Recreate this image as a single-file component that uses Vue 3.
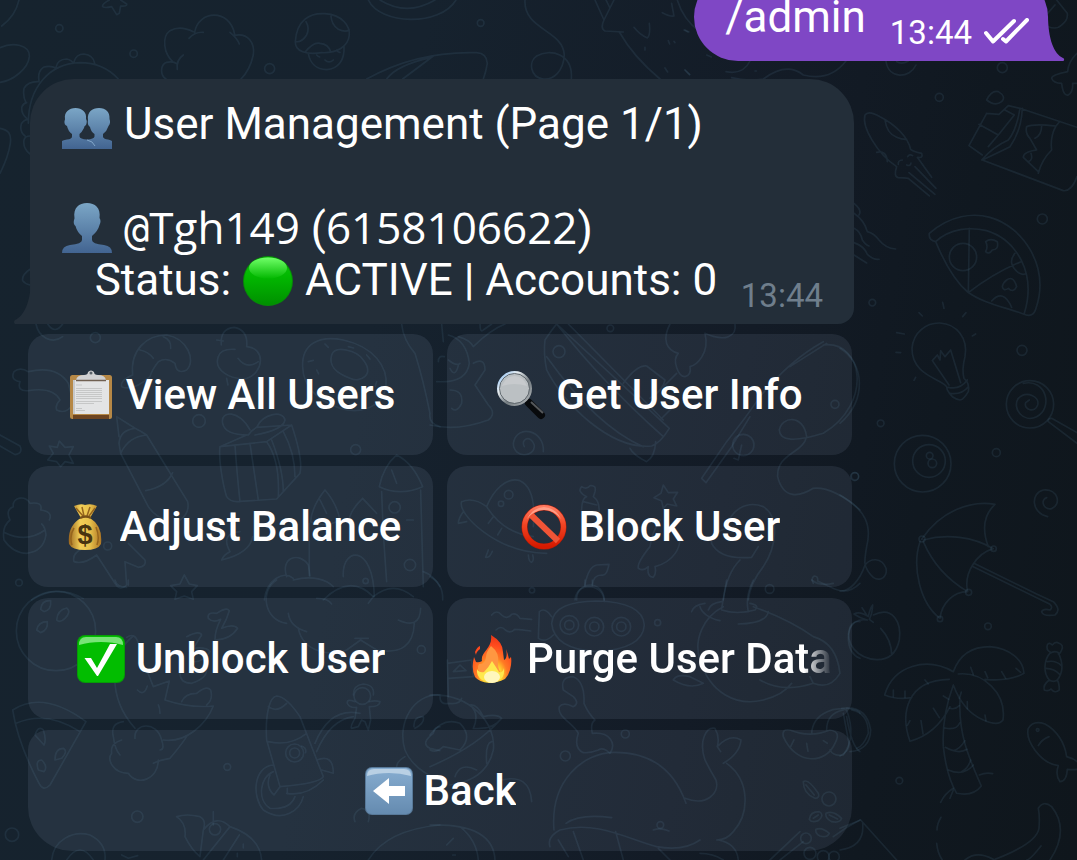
<script setup>
// Wallpaper doodles, grouped into tiles. Each tile is drawn at a third of its own units.
const tiles = [
  {
    x: 0, y: 0,
    dots: [[178, 85, 11], [401, 161, 11], [809, 206, 15]],
    lines: [
      'M57 0C50 30 30 60 5 78M0 143C40 125 90 135 88 170C85 205 40 242 0 247M0 385C25 390 35 400 31 430C25 470 10 500 0 520',
      'M328 0Q305 12 308 20Q315 25 335 20L350 44L358 40L362 18Q382 20 380 12L362 0',
      'M85 370C85 260 150 190 240 188C290 188 330 210 355 237M222 186Q228 162 252 162Q280 165 284 190M168 202Q172 178 200 177Q215 180 220 190M117 242Q112 215 130 202Q150 195 168 204M78 308Q68 290 72 265Q85 243 117 245M80 355Q62 340 66 320Q70 310 80 308M75 408Q58 395 64 372Q70 360 84 358M90 462Q68 445 72 420Q75 408 90 408M90 808Q65 825 68 842Q75 852 90 855',
      'M498 237C480 225 480 195 500 187Q520 183 532 192M532 208Q528 180 550 165M520 187C490 160 485 110 510 92Q540 75 580 95M567 115Q585 95 610 97M584 97C595 30 690 25 704 103M690 97Q712 115 718 132M704 106C745 98 765 130 760 165C752 200 740 220 723 237',
      'M886 125C890 60 930 38 975 41C1030 45 1050 80 1048 105C1045 140 1010 160 965 158C920 165 885 155 886 125ZM918 65Q930 85 920 105Q905 128 888 125M993 48Q995 75 1015 88Q1035 98 1048 90M915 157Q940 125 960 130Q985 132 992 155M925 160C930 190 950 208 980 209C1015 207 1035 180 1032 138M975 180Q987 192 1000 180M950 165q5 5 9 6M1010 150q3 8 10 7',
    ],
  },
  {
    x: 340, y: 0,
    dots: [[422, 69, 10]],
    lines: [
      'M85 0C120 75 300 80 348 0M120 0Q200 50 285 0M80 237C200 170 310 155 410 158Q440 160 442 190Q438 215 430 237M140 237Q170 195 275 172M188 237L280 168',
      'M555 0C550 90 670 90 673 165C670 215 640 240 610 237C570 232 565 185 590 168C630 145 700 160 694 237',
      'M765 0L792 60L822 0M792 60Q780 85 795 93L850 96M838 96Q880 170 960 237M798 0l12 24M1012 0Q1030 60 1080 95M882 82Q900 105 922 114Q932 105 928 70M967 38Q990 50 1002 48L995 10M915 142v8M985 122l4 10M1002 124l3 4M1035 90l12 6M975 204l8 12M1035 210l14 14',
    ],
  },
  {
    x: 680, y: 0,
    dots: [[967, 203, 15], [778, 292, 12]],
    lines: [
      'M138 215Q190 225 210 183M155 233Q200 245 250 237Q320 185 370 225Q450 245 498 183M618 183C625 240 690 235 708 195M650 185Q665 195 685 183M80 165l14 6M15 210l14 14M12 90l12 6M225 213h4',
      'M1105 80Q1130 90 1145 75Q1165 60 1162 40L1130 0M1103 40L1125 15M1191 160Q1165 185 1163 215Q1115 225 1115 235Q1120 250 1145 250Q1150 290 1165 285Q1180 275 1178 250L1191 250',
      'M650 500C590 460 545 380 555 345Q565 330 600 350C650 375 685 415 692 448Q700 455 725 460Q730 475 715 472M650 500Q640 530 655 533Q675 533 685 535L748 588M687 518L765 583M705 500L768 565M712 472L755 532M615 360Q620 400 650 412Q670 420 680 418M590 457Q620 450 622 485M655 493q-2-12 12-13M680 495q12 5 13-6M683 470q5-9 15-3',
      'M920 340L867 437L907 465M920 340L957 343L985 317L1020 325L1191 382M897 373L955 405M975 330L1003 345L955 405L925 440M1020 325Q1010 390 985 420Q940 440 905 480M1027 325Q1025 390 990 440Q960 455 907 480L1150 572Q1175 575 1191 530M1140 364L1128 378M1040 380Q1060 370 1128 378Q1110 410 1115 450Q1085 480 1075 520M1075 515L1030 472Q1030 455 1070 450L1050 415Q1035 400 1040 380M1085 378Q1085 405 1065 415M1045 485q15-5 8-25M920 300q15-30 35-25q25 15 10 30q-20 15-45-5',
      'M522 610q25 20 15 35M522 640q30 20 40 55q20 5 35 25q20 25 50 27M522 685q20 10 25 35q10 15 20 18M522 728q30 10 40 35q20 18 35 15M522 765l38 24',
    ],
  },
  {
    x: 840, y: 200,
    dots: [[607, 57, 15], [97, 308, 10], [546, 451, 15], [122, 670, 10], [469, 758, 12], [45, 829, 11], [369, 171, 41], [570, 613, 71], [248, 791, 85], [267, 783, 49], [269, 767, 10], [277, 790, 13]],
    lines: [
      'M268 100C330 45 400 38 450 52C550 80 630 200 588 325Q580 355 550 342C490 320 430 310 383 276C340 240 310 180 287 125Q265 120 268 100M287 125C330 85 390 80 440 92C530 120 590 220 553 340M388 85L385 278Q460 220 543 185M525 160Q500 190 535 218Q545 225 555 222M455 303Q490 265 515 322M437 125q15-12 35 0q5 25-15 25q-10 15-20 5q8-15 0-30M500 240q20-15 30 20q-10 20-25 5q-15 10-18-5q2-12 13-20',
      'M320 560C300 535 215 525 216 445C220 395 260 368 300 369C350 372 385 415 375 470Q365 510 372 535Q390 550 385 575Q370 600 360 600Q335 597 322 570ZM325 562Q360 570 382 540M330 580Q365 585 385 560M327 555L277 482L292 465L300 480L302 452L315 470L332 450L362 548M308 307l4 18M237 338l10 10M378 338l-10 12M170 398l23 4M407 402l-10 6M168 457l14 1M227 532l-5 9',
      'M550 550C620 535 640 625 590 650C550 670 515 625 535 595C560 570 600 590 593 615C585 640 550 630 557 608L568 600M711 698L635 655q-12 0-10 10L711 730M623 950C575 940 570 880 610 870C655 865 665 915 635 926C610 930 600 900 620 893',
      'M0 445C75 490 80 600 0 670',
    ],
  },
  {
    x: 840, y: 500,
    dots: [[246, 117, 9], [461, 146, 8], [386, 277, 9], [300, 357, 8], [444, 379, 10], [178, 842, 10], [593, 690, 4]],
    lines: [
      'M245 118C300 35 390 0 465 13Q415 60 445 140M250 120C320 100 400 110 460 146C410 160 370 220 383 275C340 275 305 310 300 355C240 310 215 200 240 125M250 125Q290 220 383 275M402 190L590 282L640 305Q665 330 645 345Q610 350 605 335Q610 325 630 330Q640 322 630 313L400 200',
      'M100 345C160 315 185 370 178 420Q165 480 110 479C50 475 15 430 30 385Q45 355 80 360M82 360Q60 355 42 342Q60 333 85 350Q90 325 98 315Q97 340 88 358L100 367M66 323L82 348M122 385Q155 420 155 465',
      'M0 -15C80 30 95 80 80 140C70 200 75 195 85 215C110 255 145 235 138 205C125 170 90 175 75 195C60 240 30 275 0 273',
      'M340 515C360 460 400 440 450 440C510 445 550 480 552 520Q510 545 435 538M340 515C260 470 160 495 134 585Q170 600 215 593M328 538C200 540 180 640 210 724C260 710 300 680 330 620M355 522C430 515 500 580 489 660Q475 680 430 660Q370 635 340 555Q305 650 310 740Q320 830 350 880Q400 890 424 858C385 770 355 700 360 600',
      'M330 625q15 5 28-8M314 684q35 8 45-15M316 742q40 22 65 6M325 810q45 20 75-15M340 752q20-5 35-30M365 815q20-10 27-35M392 502l8 22M435 515l8 18M485 515l12 20M528 505l14 12M160 570v20M195 573v20M255 540l10 12M280 625l18 28M243 662l6 40M210 662l-8 14M310 588l16 10M364 576l-6 20M382 605v22M435 645l3 18M418 825q20-8 40-4M340 865q-25 15-38 42M340 870l-10 25M303 952q-12 20-12 38M290 1030q3 30 17 50',
      'M622 435q5-10 15 0q10-12 20-5q15 5 8 20q-5 12-10 12M622 435q-5 15 10 22C610 480 610 520 628 540M655 458C670 490 668 520 652 540M628 540q-20 15-15 30q12 5 20-3q12 15 25 3q0-20-6-30q-12 8-24 0M622 485q25-5 42 12M618 505q25 0 43 20M630 460q15-10 28 0',
      'M655 797C600 790 555 720 565 685Q580 660 615 672C650 690 675 730 680 770Q700 775 711 785M711 808Q695 810 682 808Q680 845 660 845Q645 825 655 797M595 737q10-18 32-27',
      'M465 1078Q590 1030 597 985Q600 950 595 925Q610 900 635 920Q690 990 630 1080M603 1038Q570 1080 560 1080M375 1080Q410 1050 460 1078M0 985L62 960L170 1080M68 970Q75 1040 0 1050M5 625Q80 615 92 690Q90 750 30 755M10 640L25 720Q35 750 0 768M35 630Q85 640 85 700Q70 740 50 745',
    ],
  },
  {
    x: 0, y: 320,
    dots: [[286, 53, 15], [597, 303, 19], [1067, 389, 15], [57, 788, 10], [323, 678, 12], [1184, 562, 17], [1230, 735, 17], [1097, 783, 8]],
    lines: [
      'M108 12C115 50 155 75 188 50M143 12Q165 45 188 12M85 212Q50 215 60 185Q30 180 42 155Q60 140 85 155Q170 135 205 190L220 250Q200 285 170 270Q165 255 180 240Q160 200 85 212M0 345L60 378Q70 400 45 404L0 378',
      'M398 165C390 90 440 45 500 45C560 55 590 120 560 150Q530 165 525 130Q500 110 475 125Q455 150 450 170Q400 215 365 200Q360 180 398 165M420 90Q445 95 460 115M490 50Q515 60 512 85',
      'M664 75Q660 25 703 22Q745 30 740 80M740 80C800 85 790 160 740 175C690 180 640 150 655 110Q662 85 705 88M714 115Q740 150 775 125M650 60l20 3M680 175l4 20',
      'M908 140C905 70 960 45 1030 60C1120 80 1165 140 1158 200C1150 260 1080 285 1020 265C950 240 910 200 908 140ZM995 105C1005 75 1070 90 1090 120C1125 165 1080 190 1050 175C1010 160 985 140 995 105ZM925 125l15-4M975 72l10 10M1045 80l16 4M1100 105l10 12M1130 185l-4 14M950 150l6 12',
      'M1205 12Q1210 60 1245 100Q1270 180 1290 280Q1285 310 1320 320M178 363L195 382L220 380L207 405L220 430L195 425L182 440L170 425L143 420L160 400L148 378L172 382ZM553 765L568 792L592 797L575 815L580 838L553 828L525 838L530 815L512 797L540 792Z',
      'M350 290L357 350M350 290L405 325Q360 330 357 370L362 400L445 560Q465 590 500 600M405 325Q425 335 440 345Q385 350 362 400M440 345L563 545Q570 580 540 600M437 512Q500 500 518 458',
      'M660 380C655 420 670 500 680 530Q690 545 710 545L830 537L900 460Q910 420 875 315M660 380L800 365L875 315L770 322M800 365Q840 420 835 530M750 370L775 540M705 375Q710 450 720 545M815 360Q850 450 850 515M850 335Q885 400 885 470M660 380L740 345M750 330C720 270 660 270 668 310Q675 345 745 345Q755 330 770 322C790 280 850 270 855 300Q850 330 765 345',
      'M928 768V610M975 510Q935 560 932 605Q975 625 1020 600Q1010 550 975 510ZM1088 535Q1050 570 1045 610M1088 535L1130 580M1190 405Q1150 440 1138 500Q1200 530 1268 500Q1240 430 1190 405ZM1145 515L1150 640L1160 785M1262 510L1270 800M1030 770C1025 680 1120 670 1123 830M960 540l20 40M1175 450l15 40M1020 605V660M1220 600h20',
      'M793 840C800 780 850 750 880 775M860 770C840 710 900 695 925 735L930 768M880 780C940 765 980 780 1000 800M970 840Q1050 760 1120 830Q1180 780 1240 830M1270 755Q1300 765 1320 800M95 840Q170 790 250 836',
      'M30 600Q15 570 40 560C35 530 80 525 90 550Q130 545 122 570Q160 575 148 600M30 600Q5 620 12 660Q40 700 80 700Q130 695 138 645Q135 620 125 612M15 638Q80 670 135 630M250 685Q215 700 222 725Q250 735 290 705L345 790Q360 815 380 795L375 725L415 742Q440 740 435 720L385 670M665 720Q670 705 690 695Q660 640 720 635M665 720Q750 700 758 650',
    ],
  },
  {
    x: 430, y: 320,
    dots: [[387, 95, 18], [940, 375, 32], [1215, 253, 12], [541, 25, 10], [1274, 470, 12], [306, 811, 8], [1019, 807, 13], [236, 524, 13], [213, 551, 8]],
    lines: [
      'M40 65L35 12M55 45Q110 60 118 130Q110 190 20 185M130 80Q180 30 225 12M85 50Q120 60 130 80M150 12Q150 40 160 30L185 12M130 130Q165 110 165 150L135 195L175 255Q200 280 175 300Q80 335 0 315M60 210Q100 210 95 250Q80 280 65 265M25 125q0-20 18-15M55 120q25 20 35 10M60 145q15 30 25-8',
      'M345 60Q365 30 380 12L718 325Q690 370 665 378C540 390 400 250 350 150Q340 100 345 60M415 12L700 300M380 12Q520 190 700 350M350 110Q500 320 640 380M600 385Q610 405 650 425Q675 410 677 365M580 190Q620 135 650 138L705 180Q700 210 660 235M690 300L740 250M700 200L740 160',
      'M720 12C695 60 710 90 745 100C725 120 745 170 765 170Q785 165 780 140C800 135 840 100 825 40Q870 60 895 50Q920 40 915 12M340 395C345 330 260 310 250 370C250 415 315 415 313 375C300 340 270 360 283 380',
      'M815 475L890 365Q950 290 990 230Q1080 120 1180 65M828 488L905 380L960 290M815 475L828 488M1080 140L1190 70M935 375L925 420L912 415M1180 75C1300 60 1330 250 1180 340Q1050 380 1048 330C1055 290 1120 280 1130 350C1120 400 1040 400 1043 470C1060 540 1110 530 1150 505Q1210 500 1290 570',
      'M95 545C80 580 200 700 350 700M95 545Q130 530 170 560C190 510 230 470 270 482C310 500 315 560 310 620M170 560Q220 640 310 650M100 575Q85 595 85 610L110 605M175 690l-8 22q12 3 20-18M295 705q2 22 10 22q8-5 3-22M190 590l-15 20M215 625l-12 20',
      'M455 570Q455 535 470 530Q440 515 455 500Q470 510 480 497Q500 495 495 515Q490 530 490 530Q510 545 507 575M460 545L500 555M700 495L715 518L743 517L730 537L740 558L712 552L700 565L695 543L672 533L693 520Z',
      'M660 680Q620 730 625 745Q640 755 655 740Q650 770 670 772Q680 760 675 740C730 725 760 680 745 640M690 600Q665 640 660 680M845 670Q840 640 890 625C900 570 950 540 1000 560C1050 590 1040 680 1000 740Q960 790 955 840M845 670Q870 720 965 712L985 680M930 720Q890 760 880 840',
      'M440 840C440 780 520 780 523 840M465 795Q475 740 500 735L537 733Q530 770 515 765Q490 765 487 795M1150 790q-8-15 3-22q12 0 10 15L1200 800Q1250 830 1290 790M0 770Q40 790 38 840',
    ],
  },
  {
    x: 0, y: 580,
    dots: [[168, 153, 119], [682, 561, 10], [412, 710, 17], [36, 764, 20], [1264, 209, 12], [884, 519, 27], [884, 519, 15], [1087, 348, 25], [645, 748, 17]],
    lines: [
      'M122 88Q125 60 152 62Q155 90 132 95ZM170 120Q172 90 200 84Q215 95 195 115Q180 130 170 120ZM110 150Q115 125 142 125Q145 150 122 158Z',
      'M625 115Q620 95 650 100Q680 80 688 92Q680 120 665 145Q700 130 713 145Q690 180 645 180Q645 150 662 118Q640 130 625 115ZM560 170Q600 150 605 165L580 205Q620 200 630 215Q610 250 570 245M540 280Q540 310 575 310Q620 295 620 270L575 280',
      'M400 168C330 220 320 350 405 445M380 172Q405 155 415 190M440 270L460 320L508 303L495 360Q570 385 640 378C620 430 560 490 490 480M545 365Q555 340 590 340Q620 315 632 330Q640 360 620 375M412 330q20 20 30-12M475 375q5 10 5 25M405 475C400 430 470 420 485 480Q495 510 480 510M475 540C475 600 410 620 385 580C340 580 320 540 335 520Q330 490 365 480M370 425Q330 430 340 470Q345 510 360 525M460 550Q480 540 510 535Q540 500 560 470',
      'M38 390Q130 330 258 425L150 615Q130 635 118 612C80 540 50 470 38 390ZM48 430Q140 390 240 455M105 465Q115 435 130 450Q140 480 132 495ZM165 540Q165 505 190 505Q205 515 185 535ZM115 570Q105 540 125 540Q145 560 132 575Z',
      'M800 480C795 400 810 350 830 348Q860 350 900 410L970 590Q960 610 840 620L800 480M805 380Q830 400 860 370M805 485Q870 500 920 460M860 640Q920 650 970 600M862 625V642M950 540Q1000 520 1000 580L965 570M820 555C760 560 755 650 790 690C850 730 900 690 910 650M820 575C780 590 770 660 810 685Q870 690 885 650M810 585Q795 620 822 645L840 620M945 490Q990 380 1080 400M950 515Q990 420 1060 410M905 498q15 5 12 20',
      'M1060 345Q1060 315 1090 312Q1125 315 1120 345M1065 365Q1040 355 1042 370Q1050 385 1070 382L1065 415Q1050 440 1055 445L1075 440L1085 420L1095 425L1105 450L1112 420L1108 380Q1140 380 1140 365Q1125 360 1108 365',
      'M860 130C790 120 780 30 830 0M865 100Q870 140 920 155M895 145C910 220 1000 230 1040 210L1082 180L1130 210Q1240 230 1243 130M950 55Q985 55 995 72M1120 50L1105 70M1065 175h40M1195 120Q1260 150 1262 85',
      'M1320 345C1240 340 1190 430 1215 510Q1240 570 1320 600M1190 560Q1190 545 1215 530M1320 440Q1305 440 1300 460Q1260 490 1290 505L1320 512M1242 440Q1240 410 1270 410Q1275 430 1245 445',
      'M530 710Q560 700 600 710Q620 720 610 750L600 830M530 710Q560 730 555 770Q575 810 600 830M610 750Q650 700 690 740Q780 770 785 840M690 740L610 840M718 765L670 840M640 695v40M155 840C160 780 220 750 270 765Q320 790 315 840M200 840Q240 780 280 840M1105 840Q1160 750 1320 735M1105 725Q1115 690 1085 685Q1055 700 1065 725M365 825l20 10l28-8M730 792v12M712 820v10M345 0Q350 22 380 22M385 0v15',
    ],
  },
  {
    x: 430, y: 580,
    dots: [[418, 135, 28], [418, 135, 14], [493, 140, 28], [493, 140, 14], [574, 140, 28], [574, 140, 14], [683, 128, 9], [586, 462, 12], [406, 528, 15], [1197, 657, 21], [1128, 775, 16], [1140, 820, 18], [1180, 830, 18], [1212, 830, 16], [691, 735, 10]],
    lines: [
      'M185 105q15-18 30 0q15 15 30-2q15-5 25 12l35 3M198 150q15-15 28 0q15 12 28-2q20 0 48 5M365 130C370 80 420 65 500 63C590 65 640 90 643 135C640 185 590 210 500 215C420 210 370 185 365 130ZM365 110Q345 80 328 95L325 175Q345 190 370 165M435 60Q440 20 480 20Q520 25 523 65M465 0v18M487 0v18',
      'M880 80C820 110 790 180 810 240C840 340 920 380 1000 360Q1060 345 1085 310M890 0L875 85M970 0Q945 50 955 95M835 90Q840 70 875 65M875 90Q920 105 975 90Q990 75 960 70M785 95Q790 75 825 70M810 80Q820 110 870 122M925 132Q1010 130 1015 95M970 80Q1080 120 1150 170Q1220 190 1230 280Q1200 330 1150 310L1140 290M990 300Q1060 340 1150 310M730 300Q740 280 780 290L820 310Q780 330 730 300',
      'M52 250L125 240L130 290L55 295M52 240L55 350M70 275L90 255L108 272ZM400 330Q390 290 430 290Q465 305 462 370Q475 400 495 420Q480 430 487 460C540 455 560 490 540 520Q520 500 505 510Q480 520 460 518Q430 505 445 460C430 430 380 410 388 380Q400 365 430 380Q450 370 430 350Z',
      'M0 345C120 340 200 430 190 510Q170 600 60 615M0 465Q40 410 90 430Q130 470 90 510L40 500Q20 520 0 510M120 375Q150 400 130 445Q190 450 215 415Q200 400 160 410Q140 370 120 375M0 560Q140 500 210 420M30 350Q30 375 55 370Q90 375 95 355M170 550Q165 490 185 485M75 590Q90 545 140 570',
      'M372 750C360 600 460 520 550 517C680 515 740 590 768 670M765 655C830 680 870 640 858 600Q840 570 825 540C805 480 830 440 855 445Q870 470 862 500L872 515M862 500Q900 460 933 480Q930 520 880 550M890 550C960 600 960 700 910 755Q890 780 860 780M408 730Q450 700 545 713M360 800Q350 770 390 750C500 720 600 780 680 800Q760 815 810 780M430 755L460 840M557 755L580 840M685 805L720 840M385 780L415 830M670 750q20-8 47 3M865 780Q920 790 925 840M810 820Q850 820 880 840',
      'M1060 470Q1055 445 1080 450Q1140 475 1200 450Q1235 455 1215 490C1190 550 1100 560 1060 470ZM1145 460C1150 390 1230 380 1250 390Q1280 470 1240 525Q1210 530 1200 510M1190 450Q1190 400 1240 390M1250 385Q1290 390 1290 400M1092 480l-10 20M1130 490l4 24M1180 482l12 8M1250 410Q1265 500 1290 515M1255 165Q1260 120 1290 125M1255 170Q1255 220 1290 235',
      'M1120 605Q1135 595 1165 640Q1170 655 1155 655Q1120 640 1120 605ZM1128 615l25 30M1138 718Q1140 695 1168 695Q1185 705 1165 722Q1145 730 1138 718ZM1150 715l15-10M1188 700Q1210 690 1235 715Q1230 730 1205 725Q1185 715 1188 700ZM1198 705l25 12M1158 748Q1175 740 1198 760Q1190 775 1170 768Q1155 760 1158 748ZM1020 840L1110 755M1050 840L1120 785M1210 770Q1250 740 1290 720M0 735Q190 730 195 840M90 740Q140 780 145 840M50 795l20-20M68 825h8M215 600Q300 580 305 665M1145 0Q1170 20 1210 10',
    ],
  },
]
</script>

<template>
  <main class="chat">
    <svg class="wallpaper" viewBox="0 0 1077 860" preserveAspectRatio="xMinYMin slice" aria-hidden="true">
      <g v-for="(t, i) in tiles" :key="i" :transform="`translate(${t.x} ${t.y}) scale(0.3333)`">
        <path v-for="(d, j) in t.lines" :key="j" :d="d" />
        <circle v-for="(c, j) in t.dots" :key="'c' + j" :cx="c[0]" :cy="c[1]" :r="c[2]" />
      </g>
    </svg>

    <article class="bubble outgoing">
      <span class="command">/admin</span>
      <time class="time">13:44</time>
      <svg class="ticks" viewBox="0 0 46 26" aria-label="Read">
        <path d="M2 15L9 23.500L30 3M19 21L22 23.500L43 2" />
      </svg>
      <svg class="tail tail-right" viewBox="0 0 17 46" aria-hidden="true">
        <path d="M0 0C0 24 6 39 15 43Q17 44 15.500 46H0Z" />
      </svg>
    </article>

    <section class="incoming-group">
      <article class="bubble incoming">
        <svg class="tail tail-left" viewBox="0 0 17 46" aria-hidden="true">
          <path d="M17 0C17 24 10 38 1 42Q-1 44 1 46H17Z" />
        </svg>
        <div class="message">
          <p class="line">
            <svg class="emoji" viewBox="0 0 50 50" role="img" aria-label="Users">
              <defs>
                <linearGradient id="person" x1="0" y1="0" x2="0" y2="1">
                  <stop offset="0" stop-color="#7ba6c6" />
                  <stop offset="1" stop-color="#426491" />
                </linearGradient>
              </defs>
              <path fill="url(#person)" d="M0 50V42Q1 41 5 40.500Q10 40 10 37.500V35Q6 32 5 27Q2 26 2.500 22Q3 21 3 20C2 13 7 9 13.500 9C20 9 25 13 24 20Q25.500 22 24 26Q22 27 22 29Q20 33 17.500 35V37.500Q18 40 25 40.500Q32 40 32.500 37.500V35Q29 33 28 28Q25 26 26 21C25 13 30 9 37 9C44 9 48 13 47.500 20Q49 24 46.500 27Q45 32 41 35V38Q42 40 46 40.500Q49 41 50 42V50Z" />
              <path d="M25 41Q31 42 33 47" fill="none" stroke="#82a6c9" stroke-width="1" />
            </svg>
            <span class="after">User Management (Page 1/1)</span>
          </p>
          <p class="line"></p>
          <p class="line">
            <svg class="emoji" viewBox="0 0 50 50" role="img" aria-label="User">
              <path fill="url(#person)" d="M0 50Q0 43 8 42Q20 41 20 37V33Q15 29 13.500 23Q11 21 12 17Q12.500 16 12.500 15C11 5 17 0 25 0C33 0 39 5 37.500 15Q39.500 18 37.500 22Q36 28 30 33V37Q30 41 42 42Q50 43 50 50Z" />
            </svg>
            <span class="after"><code><span class="at">@</span>Tgh149</code> (<code>6158106622</code>)</span>
          </p>
          <p class="line status">
            <span>{{ '   Status: ' }}</span>
            <svg class="emoji wide" viewBox="0 0 52 52" role="img" aria-label="Green">
              <defs>
                <linearGradient id="green" x1="0" y1="0" x2="0" y2="1">
                  <stop offset="0" stop-color="#12c410" />
                  <stop offset="0.4" stop-color="#02b800" />
                  <stop offset="1" stop-color="#009000" />
                </linearGradient>
                <linearGradient id="shine" x1="0" y1="0" x2="0" y2="1">
                  <stop offset="0" stop-color="#70ff68" />
                  <stop offset="1" stop-color="#04b902" />
                </linearGradient>
              </defs>
              <circle cx="26" cy="27" r="25" fill="#078b08" />
              <circle cx="26" cy="27" r="24" fill="url(#green)" />
              <ellipse cx="26" cy="14" rx="19" ry="10.500" fill="url(#shine)" />
            </svg>
            <span>{{ ' ACTIVE | Accounts: 0' }}</span>
          </p>
        </div>
        <time class="time muted">13:44</time>
      </article>

      <nav class="keyboard" aria-label="Actions">
        <button type="button">
          <svg class="emoji" viewBox="0 0 50 50" aria-hidden="true">
            <rect x="4" y="5" width="42" height="44" rx="2.500" fill="#b68846" />
            <path d="M7 45H43V49H7Z" fill="#6e4521" />
            <path d="M7 10H43V44H7Z" fill="#e3e4e5" />
            <path d="M7 10H9V44H7Z" fill="#c7c8c9" />
            <path d="M10 15h6M10 18.500h26M10 20.500h26M10 22.500h26M10 24.500h26M10 26.500h26M10 28.500h26M10 31.500h26M10 33.500h18M10 38.500h6M10 40.500h9" stroke="#c6c7c7" stroke-width="1" />
            <path d="M10 10Q11 5 18 5Q22 5 22 2Q25 -1 28 2Q28 5 32 5Q39 5 40 10Z" fill="#cfd0d2" />
            <path d="M10 10.500H40" stroke="#706052" stroke-width="1.500" />
            <circle cx="25" cy="3" r="1.500" fill="#59626a" />
          </svg>
          <span class="label">View All Users</span>
        </button>

        <button type="button">
          <svg class="emoji" viewBox="0 0 50 50" aria-hidden="true">
            <defs>
              <linearGradient id="rim" x1="0" y1="0" x2="1" y2="1">
                <stop offset="0" stop-color="#87bdf3" />
                <stop offset="0.3" stop-color="#e8eef2" />
                <stop offset="0.6" stop-color="#737b80" />
                <stop offset="1" stop-color="#b6babc" />
              </linearGradient>
            </defs>
            <path d="M30 30L37 37" stroke="#818588" stroke-width="5" />
            <path d="M33 33L45 45" stroke="#080a0c" stroke-width="8" stroke-linecap="round" />
            <path d="M35 32L47 43" stroke="#55585b" stroke-width="2" />
            <circle cx="18.500" cy="18.500" r="16" fill="#bbc0c3" stroke="url(#rim)" stroke-width="3" />
            <circle cx="18.500" cy="18.500" r="15" fill="none" stroke="#60686e" stroke-width="1" />
            <path d="M6 16Q10 6 19 6Q28 7 31 16Q18 12 6 16Z" fill="#c7cacd" />
          </svg>
          <span class="label">Get User Info</span>
        </button>

        <button type="button">
          <svg class="emoji" viewBox="-6 0 50 50" aria-hidden="true">
            <defs>
              <linearGradient id="gold" x1="0" y1="0" x2="1" y2="0">
                <stop offset="0" stop-color="#9a651e" />
                <stop offset="0.35" stop-color="#f1ce57" />
                <stop offset="0.65" stop-color="#e8c14b" />
                <stop offset="1" stop-color="#ad7523" />
              </linearGradient>
            </defs>
            <path d="M8 4Q15 1 19 3Q25 1 31 4L24 16Q37 24 35 42Q32 48 19 48Q6 48 3 42Q1 24 15 16Z" fill="url(#gold)" />
            <path d="M10 6L17 14M16 5L18 14M24 5L21 14M29 6L23 14M8 26Q3 34 6 43M30 25Q34 35 31 43" fill="none" stroke="#96651d" stroke-width="1.500" />
            <path d="M14 16Q20 13 25 16" fill="none" stroke="#785018" stroke-width="2.500" />
            <text x="19" y="42" text-anchor="middle" class="coin">$</text>
          </svg>
          <span class="label">Adjust Balance</span>
        </button>

        <button type="button">
          <svg class="emoji" viewBox="0 0 50 50" aria-hidden="true">
            <defs>
              <linearGradient id="ban" x1="0" y1="0" x2="0" y2="1">
                <stop offset="0" stop-color="#ff7a5f" />
                <stop offset="0.45" stop-color="#f04322" />
                <stop offset="1" stop-color="#d61a00" />
              </linearGradient>
            </defs>
            <circle cx="25" cy="25" r="19.500" fill="none" stroke="#b41c08" stroke-width="6" />
            <circle cx="25" cy="25" r="19.500" fill="none" stroke="url(#ban)" stroke-width="5" />
            <path d="M11 12L39 39" stroke="#f05436" stroke-width="6" />
            <path d="M8 17Q13 6 25 5Q37 6 42 17Q35 8 25 8Q15 8 8 17Z" fill="#ff9e87" />
          </svg>
          <span class="label">Block User</span>
        </button>

        <button type="button">
          <svg class="emoji" viewBox="0 0 50 50" aria-hidden="true">
            <rect x="1" y="1" width="48" height="48" rx="8" fill="#079b07" />
            <rect x="2" y="2" width="46" height="46" rx="7" fill="#02bd00" />
            <path d="M3 11Q3 3 10 3H40Q47 3 47 11Q37 8 25 8Q13 8 3 11Z" fill="#78e477" />
            <path d="M8.500 24H15L21 34L34 10H41L22 42H21Z" fill="#fff" />
          </svg>
          <span class="label">Unblock User</span>
        </button>

        <button type="button">
          <svg class="emoji" viewBox="0 0 50 50" aria-hidden="true">
            <defs>
              <radialGradient id="fire" cx="0.5" cy="0.85" r="0.8">
                <stop offset="0" stop-color="#fff5a0" />
                <stop offset="0.3" stop-color="#ffd42e" />
                <stop offset="0.5" stop-color="#ff7a24" />
                <stop offset="0.8" stop-color="#ff4a1e" />
                <stop offset="1" stop-color="#ed3b18" />
              </radialGradient>
            </defs>
            <path fill="url(#fire)" d="M24 1Q36 8 36 18Q37 26 37 26Q41 24 39 15Q41 20 42 25L44 23Q45 29 43 36L41 41L38 45Q30 49 22 49Q12 48 8 43Q4 35 7 23L9 28Q12 29 15 27C13 18 26 15 24 1ZM8 18Q10 13 13 12V15Q9 18 9 21Z" />
            <path fill="#ff9741" d="M24 12Q33 19 31 29Q31 37 35 39Q25 48 14 40Q9 34 12 30Q18 31 19 23Q19 18 24 12Z" />
            <path fill="#ffe84d" d="M25 27Q29 33 32 38Q36 39 37 34Q38 41 34 45Q25 50 15 46Q9 42 10 35Q12 39 17 38Q22 33 25 27Z" />
            <ellipse cx="25" cy="43" rx="8" ry="6" fill="#fff7bd" />
          </svg>
          <span class="label">Purge User Data</span>
        </button>

        <button type="button" class="back">
          <svg class="emoji" viewBox="0 0 50 50" aria-hidden="true">
            <defs>
              <linearGradient id="blue" x1="0" y1="0" x2="0" y2="1">
                <stop offset="0" stop-color="#87add0" />
                <stop offset="1" stop-color="#658bb0" />
              </linearGradient>
            </defs>
            <rect x="1" y="1" width="48" height="48" rx="7" fill="#587999" />
            <rect x="2" y="2" width="46" height="46" rx="6" fill="url(#blue)" />
            <path d="M3 10Q3 3 10 3H40Q47 3 47 10Q36 7 25 7Q13 7 3 10Z" fill="#b9d0e4" />
            <path d="M9 25L25 12V20H41V30H25V38Z" fill="#fff" />
          </svg>
          <span class="label">Back</span>
        </button>
      </nav>
    </section>
  </main>
</template>

<style>
body {
  background: #121a23;
}
</style>

<style scoped>
.chat {
  position: relative;
  display: flex;
  flex-direction: column;
  justify-content: flex-end;
  box-sizing: border-box;
  height: 100vh;
  padding: 0 29px 9px 28px;
  overflow: hidden;
  background:
    linear-gradient(100deg, #16232e 0%, #16222e 35%, #131b26 66%, #101820 82%, #0f161c 100%);
  color: #fff;
  font-family: Roboto, "Liberation Sans", sans-serif;
}

.wallpaper {
  position: absolute;
  inset: 0;
  width: 100%;
  height: 100%;
  fill: none;
  stroke: rgba(90, 130, 155, 0.15);
  stroke-width: 5;
  stroke-linecap: round;
  stroke-linejoin: round;
}

.bubble {
  position: relative;
  display: flex;
  align-items: flex-end;
  font-size: 44px;
  line-height: 52px;
}

.outgoing {
  align-self: flex-end;
  flex: none;
  margin-bottom: 18px;
  padding: 18px 18px 18px 31px;
  border-radius: 44px 44px 0 44px;
  background: #7f47c5;
}

.time {
  margin: 0 0 -10px 24px;
  font-size: 33px;
  line-height: 40px;
}

.ticks {
  width: 46px;
  height: 26px;
  margin-left: 12px;
  margin-bottom: -1px;
  fill: none;
  stroke: #fff;
  stroke-width: 4;
  stroke-linecap: round;
  stroke-linejoin: round;
}

.tail {
  position: absolute;
  bottom: 0;
  width: 17px;
  height: 46px;
}

.tail-right {
  left: 100%;
  fill: #7f47c5;
}

.tail-left {
  right: 100%;
  margin-right: -1px;
  fill: #232e39;
}

.incoming-group {
  flex: none;
  position: relative;
  margin-right: 196px;
}

.incoming {
  justify-content: space-between;
  margin: 0 -2px 10px 2px;
  padding: 19px 31px 18px 32px;
  border-radius: 44px 44px 16px 0;
  background: #232e39;
}

.message {
  min-width: 0;
  white-space: pre;
}

.line {
  display: flex;
  align-items: center;
  height: 52px;
  margin: 0;
}

.after {
  margin-left: 12px;
}

code {
  font-family: "Open Sans", "Noto Sans", sans-serif;
}

.at {
  font-family: "DejaVu Sans Mono", monospace;
  font-size: 42px;
}

.muted {
  color: #6f7e8c;
}

.emoji {
  flex: none;
  width: 50px;
  height: 50px;
}

.wide {
  width: 52px;
  height: 52px;
}

.coin {
  fill: #473510;
  font: bold 27px "Liberation Sans", sans-serif;
}

.keyboard {
  display: grid;
  grid-template-columns: 1fr 1fr;
  gap: 11px 14px;
}

button {
  display: flex;
  align-items: center;
  justify-content: center;
  min-width: 0;
  height: 121px;
  padding: 0 20px;
  border: 0;
  border-radius: 20px;
  background: rgba(195, 225, 255, 0.085);
  color: #fff;
  font: 500 42px/52px Roboto, "Liberation Sans", sans-serif;
  cursor: pointer;
}

.label {
  min-width: 0;
  margin-left: 10px;
  overflow: hidden;
  white-space: nowrap;
}

button:nth-child(6) .label {
  mask-image: linear-gradient(to left, transparent, #000 28px);
}

.back {
  grid-column: 1 / -1;
  border-radius: 20px 20px 44px 44px;
}
</style>
